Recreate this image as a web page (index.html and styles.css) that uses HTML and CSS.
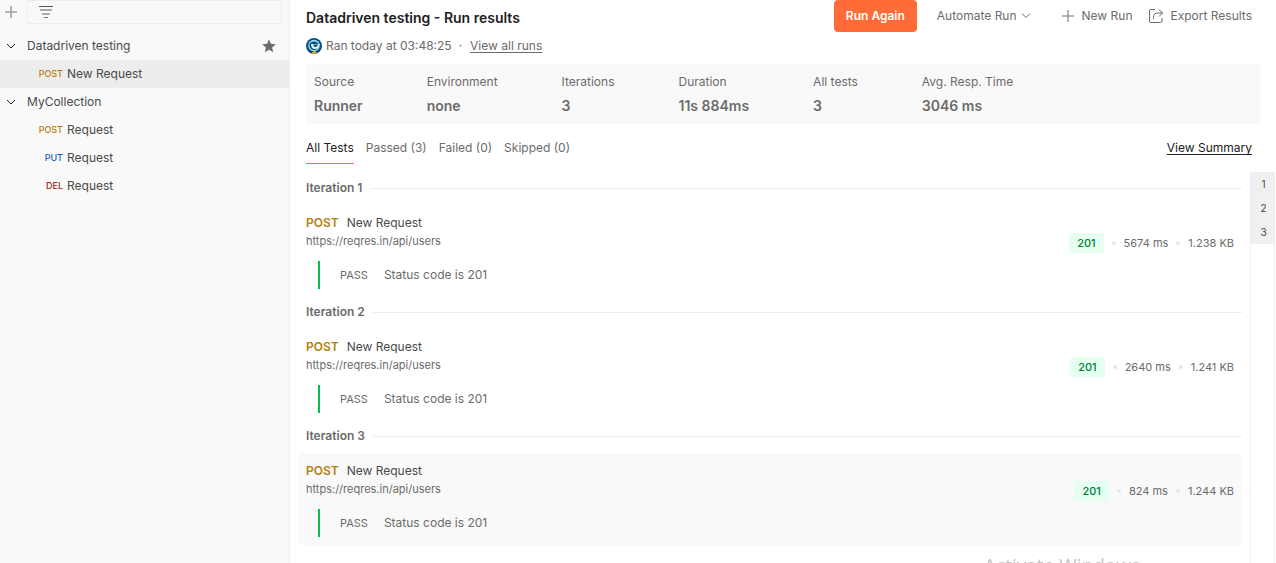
FILE: index.html
```
<!DOCTYPE html>
<html lang="en">
<head>
<meta charset="utf-8">
<title>Datadriven testing - Run results</title>
<link rel="stylesheet" href="styles.css">
</head>
<body>
<div class="app">
  <aside class="sidebar">
    <div class="sidebar-tools">
      <button class="icon-button" aria-label="Create new collection">
        <svg width="12" height="12" viewBox="0 0 12 12"><path d="M6 0v12M0 6h12" stroke="#a0a0a0" stroke-width="1.600" fill="none"/></svg>
      </button>
      <label class="filter">
        <svg width="14" height="12" viewBox="0 0 14 12" fill="none"><path d="M0 .5h14" stroke="#555"/><path d="M1 4h12M3 8h8" stroke="#aaa" stroke-width="2"/><path d="M5 11.500h4" stroke="#777"/></svg>
        <input class="filter-input" type="text" aria-label="Filter collections">
      </label>
    </div>
    <nav class="tree">
      <button class="tree-row folder">
        <svg class="caret" width="10" height="6" viewBox="0 0 10 6"><path d="M1 1l4 4 4-4" stroke="#212121" fill="none"/></svg>
        <span class="tree-name">Datadriven testing</span>
        <svg class="star" width="14" height="14" viewBox="0 0 14 14"><path d="M7 .3l1.900 4.500 4.900.4-3.700 3.200 1.100 4.800L7 10.700l-4.200 2.500 1.100-4.800L.2 5.200l4.900-.4z" fill="#6b6b6b"/></svg>
      </button>
      <a class="tree-row request selected" href="#"><span class="tree-method post">POST</span>New Request</a>
      <button class="tree-row folder">
        <svg class="caret" width="10" height="6" viewBox="0 0 10 6"><path d="M1 1l4 4 4-4" stroke="#212121" fill="none"/></svg>
        <span class="tree-name">MyCollection</span>
      </button>
      <a class="tree-row request" href="#"><span class="tree-method post">POST</span>Request</a>
      <a class="tree-row request" href="#"><span class="tree-method put">PUT</span>Request</a>
      <a class="tree-row request" href="#"><span class="tree-method del">DEL</span>Request</a>
    </nav>
  </aside>

  <main class="main">
    <header class="run-header">
      <h1 class="run-title">Datadriven testing - Run results</h1>
      <div class="actions">
        <button class="primary">Run Again</button>
        <button class="action automate">Automate Run
          <svg width="10" height="6" viewBox="0 0 10 6"><path d="M1 .5l4 4 4-4" stroke="#6b6b6b" fill="none"/></svg>
        </button>
        <button class="action">
          <svg width="12" height="12" viewBox="0 0 12 12"><path d="M6 0v12M0 6h12" stroke="#a0a0a0" stroke-width="1.600" fill="none"/></svg>
          New Run
        </button>
        <button class="action export">
          <svg width="14" height="14" viewBox="0 0 14 14"><path d="M6 .5H2Q.5.5.5 2v10q0 1.500 1.500 1.500h9.500q1.500 0 1.500-1.500V9M4.500 10V8.500Q4.500 4 9 4h4.500M10 .5L13.500 4 10 7.500" stroke="#6b6b6b" fill="none"/></svg>
          Export Results
        </button>
      </div>
    </header>

    <div class="run-info">
      <svg width="16" height="16" viewBox="0 0 16 16"><circle cx="8" cy="8" r="8" fill="#0d4f8b"/><circle cx="8" cy="7.500" r="5.800" fill="#8fe3dc"/><path d="M3.500 5.500Q8 1.500 12.500 5.500V8q-1 4-4.500 4T3.500 8z" fill="#0d4f8b"/><path d="M5 6h8.500Q13 11 9 11T5 6z" fill="#e4faf7"/><path d="M7 6.500h5q-.5 2.500-2.500 2.500T7 6.500z" fill="#0d4f8b"/><path d="M5.500 15.500L8 12.500l3.500 2.500L8 16z" fill="#f5a623"/></svg>
      <span>Ran today at 03:48:25</span>
      <span class="separator">·</span>
      <a class="text-link" href="#">View all runs</a>
    </div>

    <dl class="stats">
      <div class="stat"><dt>Source</dt><dd>Runner</dd></div>
      <div class="stat"><dt>Environment</dt><dd>none</dd></div>
      <div class="stat"><dt>Iterations</dt><dd>3</dd></div>
      <div class="stat"><dt>Duration</dt><dd>11s 884ms</dd></div>
      <div class="stat"><dt>All tests</dt><dd>3</dd></div>
      <div class="stat"><dt>Avg. Resp. Time</dt><dd>3046 ms</dd></div>
    </dl>

    <div class="tab-bar">
      <div class="tabs" role="tablist">
        <button class="tab active" role="tab" aria-selected="true">All Tests</button>
        <button class="tab" role="tab" aria-selected="false">Passed (3)</button>
        <button class="tab" role="tab" aria-selected="false">Failed (0)</button>
        <button class="tab" role="tab" aria-selected="false">Skipped (0)</button>
      </div>
      <a class="text-link summary-link" href="#">View Summary</a>
    </div>

    <div class="results">
      <div class="iterations">
        <section>
          <h2 class="iteration-title">Iteration 1</h2>
          <article class="result">
            <div>
              <div class="result-name"><span class="method">POST</span>New Request</div>
              <div class="url">https://reqres.in/api/users</div>
              <div class="assertion"><span class="verdict">PASS</span>Status code is 201</div>
            </div>
            <div class="metrics"><span class="status">201</span><span class="metric">5674 ms</span><span class="metric">1.238 KB</span></div>
          </article>
        </section>
        <section>
          <h2 class="iteration-title">Iteration 2</h2>
          <article class="result">
            <div>
              <div class="result-name"><span class="method">POST</span>New Request</div>
              <div class="url">https://reqres.in/api/users</div>
              <div class="assertion"><span class="verdict">PASS</span>Status code is 201</div>
            </div>
            <div class="metrics"><span class="status">201</span><span class="metric">2640 ms</span><span class="metric">1.241 KB</span></div>
          </article>
        </section>
        <section>
          <h2 class="iteration-title">Iteration 3</h2>
          <article class="result hovered">
            <div>
              <div class="result-name"><span class="method">POST</span>New Request</div>
              <div class="url">https://reqres.in/api/users</div>
              <div class="assertion"><span class="verdict">PASS</span>Status code is 201</div>
            </div>
            <div class="metrics"><span class="status">201</span><span class="metric">824 ms</span><span class="metric">1.244 KB</span></div>
          </article>
        </section>
      </div>
      <nav class="minimap" aria-label="Iterations">
        <button class="minimap-item">1</button>
        <button class="minimap-item">2</button>
        <button class="minimap-item">3</button>
      </nav>
    </div>
  </main>
</div>
<div class="watermark">Activate Windows</div>
</body>
</html>
```
FILE: styles.css
```
* { box-sizing: border-box; }

body {
  margin: 0;
  font: 12px/20px Inter, "Liberation Sans", sans-serif;
  color: #6b6b6b;
  background: #fff;
}

button {
  margin: 0;
  padding: 0;
  border: 0;
  background: none;
  font: inherit;
  color: inherit;
  cursor: pointer;
}

svg { display: block; flex: none; }

.app {
  display: flex;
  height: 100vh;
  overflow: hidden;
}

/* Sidebar */
.sidebar {
  flex: none;
  width: 290px;
  background: #f9f9f9;
  border-right: 1px solid #ededed;
}

.sidebar-tools {
  display: flex;
  align-items: center;
  gap: 10px;
  padding: 0 7px 0 5px;
}

.icon-button { flex: none; }

.filter {
  flex: 1;
  display: flex;
  align-items: center;
  gap: 8px;
  height: 24px;
  padding: 0 11px;
  border: 1px solid #ededed;
}

.filter-input {
  flex: 1;
  min-width: 0;
  border: 0;
  outline: 0;
  background: transparent;
  font: inherit;
}

.tree { padding-top: 8px; }

.tree-row {
  display: flex;
  align-items: center;
  width: 100%;
  height: 28px;
  color: #4a4a4a;
  text-align: left;
  text-decoration: none;
}

.folder { gap: 11px; padding: 0 13px 0 6px; }
.tree-name { flex: 1; }
.request { gap: 4px; }
.selected { background: #ededed; }

.tree-method {
  width: 63px;
  font-size: 9px;
  font-weight: 500;
  text-align: right;
}

.post { color: #b3800a; }
.put { color: #1460c4; }
.del { color: #a3241b; }

/* Run header */
.main {
  flex: 1;
  min-width: 0;
  display: flex;
  flex-direction: column;
}

.run-header {
  display: flex;
  align-items: center;
  justify-content: space-between;
  height: 32px;
  padding: 0 24px 0 16px;
}

.run-title {
  margin: 4px 0 0;
  font-size: 14px;
  font-weight: 600;
  color: #212121;
}

.actions {
  display: flex;
  align-items: center;
  gap: 17px;
}

.action {
  display: flex;
  align-items: center;
  gap: 8px;
}

.automate { gap: 4px; margin: 0 14px 0 3px; }
.export { gap: 7px; }

.primary {
  height: 32px;
  padding: 0 12px;
  border-radius: 4px;
  background: #ff6c37;
  color: #fff;
  font-weight: 600;
}

.run-info {
  display: flex;
  align-items: center;
  gap: 4px;
  padding: 4px 16px 8px;
}

.separator { padding: 0 4px 0 3px; }

.text-link {
  color: inherit;
  text-underline-offset: 2px;
}

.stats {
  display: flex;
  gap: 64px;
  margin: 0 16px;
  padding: 8px;
  background: #f9f9f9;
}

.stat { display: grid; gap: 4px; }
.stat dd { margin: 0; font-size: 14px; font-weight: 600; }

.tab-bar {
  display: flex;
  justify-content: space-between;
  padding: 8px 24px 9px 16px;
}

.tabs { display: flex; gap: 12px; }

.tab {
  height: 32px;
  border-bottom: 1px solid transparent;
}

.tab.active { color: #212121; border-bottom-color: #ff6c37; }
.summary-link { color: #212121; line-height: 32px; }

/* Results */
.results {
  flex: 1;
  display: flex;
  gap: 8px;
  padding-right: 1px;
}

.iterations { flex: 1; padding-left: 8px; }

.iteration-title {
  display: flex;
  align-items: center;
  gap: 8px;
  margin: 0;
  padding: 0 0 2px 8px;
  font-size: 12px;
  font-weight: 600;
  line-height: 30px;
}

.iteration-title::after {
  content: "";
  flex: 1;
  height: 1px;
  background: #ededed;
}

.result {
  display: flex;
  align-items: center;
  justify-content: space-between;
  padding: 8px;
  border-radius: 4px;
}

.hovered { background: #f9f9f9; }

.result-name {
  display: flex;
  gap: 8px;
  color: #4a4a4a;
}

.method { color: #b3800a; font-weight: 600; }
.url { font-size: 11px; line-height: 16px; }

.assertion {
  display: flex;
  gap: 16px;
  margin: 12px 0 0 12px;
  padding-left: 20px;
  border-left: 2px solid #0cbb52;
  line-height: 28px;
}

.verdict { font-size: 11px; }

.metrics {
  display: flex;
  gap: 8px;
  align-self: flex-start;
  margin-top: 20px;
  font-size: 11px;
}

.status {
  padding: 0 8px;
  border-radius: 4px;
  background: #e5fff1;
  color: #007f31;
  font-weight: 500;
}

.metric {
  display: flex;
  align-items: center;
  gap: 8px;
}

.metric::before {
  content: "";
  width: 4px;
  height: 4px;
  border-radius: 50%;
  background: #e6e6e6;
}

.minimap {
  width: 25px;
  margin-top: -1px;
  border: solid #ededed;
  border-width: 0 1px;
}

.minimap-item {
  display: block;
  width: 100%;
  height: 24px;
  padding-left: 2px;
  background: #f0f0f0;
  color: #4a4a4a;
  font-size: 10px;
}

.watermark {
  position: fixed;
  right: 136px;
  bottom: -16px;
  height: 28px;
  font: 19px/28px "Open Sans", sans-serif;
  color: #c4c4c4;
  pointer-events: none;
}
```
